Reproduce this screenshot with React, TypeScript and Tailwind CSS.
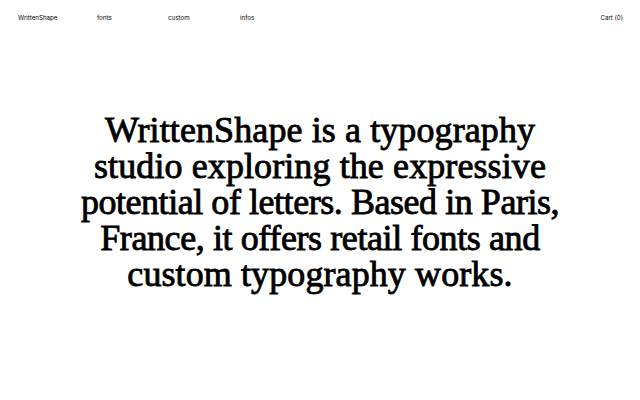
export default function App() {
  return (
    <div className="relative h-[400px] w-[640px] bg-white text-black overflow-hidden">
      <header className="absolute left-0 right-0 top-0 flex items-center px-[18px] pt-[14px] text-[6.2px] leading-[8px]" style={{ fontFamily: "Inter, 'Liberation Sans', sans-serif" }}>
        <span className="w-[79px]">WrittenShape</span>
        <span className="w-[71px]">fonts</span>
        <span className="w-[72px]">custom</span>
        <span>infos</span>
        <span className="ml-auto mr-[-1px]">Cart (0)</span>
      </header>
      <main className="flex h-full items-center justify-center pt-[4px]">
        <div className="flex flex-col items-center text-[36px] leading-[36px] [-webkit-text-stroke:0.85px_black]" style={{ fontFamily: "'Liberation Serif', serif" }}>
          <div className="tracking-[0.1px]">WrittenShape is a typography</div>
          <div className="tracking-[0.1px]">studio exploring the expressive</div>
          <div className="tracking-[-0.45px]">potential of letters. Based in Paris,</div>
          <div className="tracking-[-0.4px]">France, it offers retail fonts and</div>
          <div className="tracking-[0.1px]">custom typography works.</div>
        </div>
      </main>
    </div>
  );
}
